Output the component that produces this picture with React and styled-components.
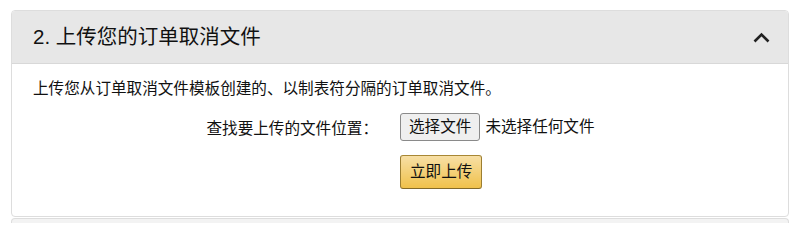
import React from "react"
import styled, { createGlobalStyle } from "styled-components"

const GlobalStyle = createGlobalStyle`
  html, body {
    margin: 0;
    padding: 0;
    background: #fff;
  }
  body {
    font-family: "Liberation Sans", "Noto Sans CJK SC", sans-serif;
    color: #111;
  }
`

const Page = styled.div`
  padding: 10px 10px 0 11px;
`

const Panel = styled.section`
  border: 1px solid #dddddd;
  border-radius: 4px;
  overflow: hidden;
  background: #fff;
`

const Header = styled.div`
  display: flex;
  align-items: center;
  justify-content: space-between;
  height: 52px;
  padding: 0 18px 0 21px;
  background: #e7e7e7;
  border-bottom: 1px solid #d8d8d8;
`

const Title = styled.h2`
  margin: 0;
  font-size: 20.5px;
  font-weight: 400;
  line-height: 26px;
  color: #111;
`

const Chevron = styled.svg`
  width: 17px;
  height: 11px;
  display: block;
`

const Body = styled.div`
  padding: 15px 21px 27px;
`

const Intro = styled.p`
  margin: 0;
  font-size: 15.6px;
  line-height: 20px;
`

const Form = styled.div`
  display: grid;
  grid-template-columns: 1fr 1fr;
  row-gap: 14px;
  margin-top: 14px;
`

const Label = styled.div`
  text-align: right;
  padding-right: 22px;
  padding-top: 4px;
  font-size: 15.6px;
  line-height: 20px;
  align-self: center;
`

const Field = styled.div`
  display: flex;
  align-items: center;
  gap: 5px;
  font-size: 15.6px;
  line-height: 20px;
`

const FileButton = styled.button`
  font-family: inherit;
  font-size: 15.6px;
  line-height: 20px;
  color: #111;
  padding: 3px 8px;
  background: #efefef;
  border: 1px solid #8a8a8a;
  border-radius: 3px;
  cursor: pointer;
`

const Hint = styled.span`
  color: #111;
`

const UploadButton = styled.button`
  grid-column: 2;
  justify-self: start;
  font-family: inherit;
  font-size: 15.6px;
  line-height: 20px;
  color: #111;
  padding: 6px 9px;
  background: linear-gradient(to bottom, #f7dfa5, #f0c14b);
  border: 1px solid;
  border-color: #a88734 #9c7e31 #846a29;
  border-radius: 3px;
  cursor: pointer;
`

const NextPanel = styled.div`
  margin-top: 1px;
  height: 4px;
  border: 1px solid #dddddd;
  border-bottom: none;
  border-radius: 4px 4px 0 0;
  background: #f3f3f3;
`

export default function App() {
  return (
    <>
      <GlobalStyle />
      <Page>
        <Panel>
          <Header>
            <Title>2. 上传您的订单取消文件</Title>
            <Chevron viewBox="0 0 17 11" aria-hidden="true">
              <path
                d="M1.5 9.5 L8.5 2.5 L15.5 9.5"
                fill="none"
                stroke="#222"
                strokeWidth="2.6"
              />
            </Chevron>
          </Header>
          <Body>
            <Intro>上传您从订单取消文件模板创建的、以制表符分隔的订单取消文件。</Intro>
            <Form>
              <Label>查找要上传的文件位置：</Label>
              <Field>
                <FileButton type="button">选择文件</FileButton>
                <Hint>未选择任何文件</Hint>
              </Field>
              <UploadButton type="button">立即上传</UploadButton>
            </Form>
          </Body>
        </Panel>
        <NextPanel />
      </Page>
    </>
  )
}
